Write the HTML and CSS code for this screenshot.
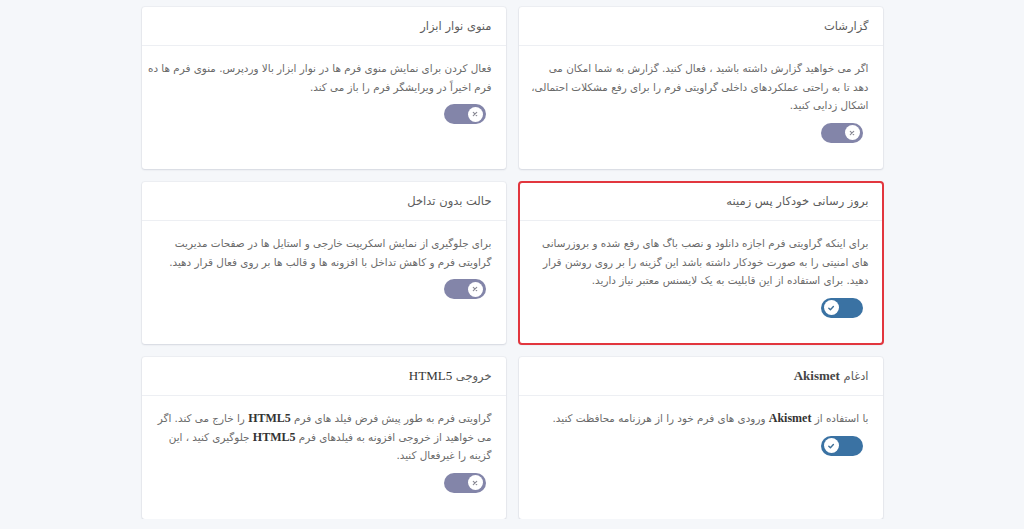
FILE: index.html
```html
<!DOCTYPE html>
<html lang="fa" dir="rtl">
<head>
<meta charset="utf-8">
<title>تنظیمات</title>
<link rel="stylesheet" href="styles.css">
</head>
<body>
<div class="grid">
  <section class="card">
    <header class="card-head"><span>گزارشات</span></header>
    <div class="card-body">
      <p class="desc">اگر می خواهید گزارش داشته باشید ، فعال کنید. گزارش به شما امکان می<br>دهد تا به راحتی عملکردهای داخلی گراویتی فرم را برای رفع مشکلات احتمالی،<br>اشکال زدایی کنید.</p>
      <span class="toggle off"><span class="knob"><svg viewBox="0 0 10 10"><path d="M3.3 3.3l3.4 3.4M6.7 3.3l-3.4 3.4"/></svg></span></span>
    </div>
  </section>
  <section class="card">
    <header class="card-head"><span>منوی نوار ابزار</span></header>
    <div class="card-body">
      <p class="desc">فعال کردن برای نمایش منوی فرم ها در نوار ابزار بالا وردپرس. منوی فرم ها ده<br>فرم اخیراً در ویرایشگر فرم را باز می کند.</p>
      <span class="toggle off"><span class="knob"><svg viewBox="0 0 10 10"><path d="M3.3 3.3l3.4 3.4M6.7 3.3l-3.4 3.4"/></svg></span></span>
    </div>
  </section>
  <section class="card highlight">
    <header class="card-head"><span>بروز رسانی خودکار پس زمینه</span></header>
    <div class="card-body">
      <p class="desc">برای اینکه گراویتی فرم اجازه دانلود و نصب باگ های رفع شده و بروزرسانی<br>های امنیتی را به صورت خودکار داشته باشد این گزینه را بر روی روشن قرار<br>دهید. برای استفاده از این قابلیت به یک لایسنس معتبر نیاز دارید.</p>
      <span class="toggle on"><span class="knob"><svg viewBox="0 0 10 10"><path d="M2.8 5.2l1.6 1.5 3-3.2"/></svg></span></span>
    </div>
  </section>
  <section class="card">
    <header class="card-head"><span>حالت بدون تداخل</span></header>
    <div class="card-body">
      <p class="desc">برای جلوگیری از نمایش اسکریپت خارجی و استایل ها در صفحات مدیریت<br>گراویتی فرم و کاهش تداخل با افزونه ها و قالب ها بر روی فعال قرار دهید.</p>
      <span class="toggle off"><span class="knob"><svg viewBox="0 0 10 10"><path d="M3.3 3.3l3.4 3.4M6.7 3.3l-3.4 3.4"/></svg></span></span>
    </div>
  </section>
  <section class="card">
    <header class="card-head"><span>ادغام <b class="latin">Akismet</b></span></header>
    <div class="card-body">
      <p class="desc">با استفاده از <b class="latin">Akismet</b> ورودی های فرم خود را از هرزنامه محافظت کنید.</p>
      <span class="toggle on"><span class="knob"><svg viewBox="0 0 10 10"><path d="M2.8 5.2l1.6 1.5 3-3.2"/></svg></span></span>
    </div>
  </section>
  <section class="card">
    <header class="card-head"><span>خروجی <span class="latin plain">HTML5</span></span></header>
    <div class="card-body">
      <p class="desc">گراویتی فرم به طور پیش فرض فیلد های فرم <b class="latin">HTML5</b> را خارج می کند. اگر<br>می خواهید از خروجی افزونه به فیلدهای فرم <b class="latin">HTML5</b> جلوگیری کنید ، این<br>گزینه را غیرفعال کنید.</p>
      <span class="toggle off"><span class="knob"><svg viewBox="0 0 10 10"><path d="M3.3 3.3l3.4 3.4M6.7 3.3l-3.4 3.4"/></svg></span></span>
    </div>
  </section>
</div>
</body>
</html>
```
FILE: styles.css
```css
* { box-sizing: border-box; }
html, body { margin: 0; padding: 0; }
body {
  background: #f5f7fa;
  font-family: "DejaVu Sans", "Noto Sans", sans-serif;
  color: #666;
}
.grid {
  width: 741px;
  margin: 7px auto 0;
  display: grid;
  grid-template-columns: 364px 364px;
  column-gap: 13px;
  row-gap: 13px;
  grid-auto-rows: 162px;
}
.card {
  background: #fff;
  border-radius: 3px;
  box-shadow: 0 1px 2px rgba(40, 50, 80, 0.12), 0 0 0 1px rgba(40, 50, 80, 0.04);
  display: flex;
  flex-direction: column;
}
.card.highlight {
  outline: 2px solid #e2363e;
  outline-offset: -1px;
}
.card-head {
  height: 39px;
  padding: 0 14px;
  display: flex;
  align-items: center;
  font-size: 11.5px;
  color: #5c5c5c;
  border-bottom: 1px solid #edeff3;
}
.card-body {
  padding: 13px 14px 0;
  display: flex;
  flex-direction: column;
  align-items: flex-start;
}
.desc {
  margin: 0;
  font-size: 10.4px;
  line-height: 18.5px;
  color: #6a6a6a;
  white-space: nowrap;
}
.latin {
  font-family: "Liberation Serif", serif;
  font-weight: bold;
  color: #333;
  font-size: 12px;
}
.card-head .latin { font-size: 13px; font-weight: bold; color: #444; }
.card-head .latin.plain { font-weight: normal; color: #333; }
.toggle {
  margin: 8px 6px 0 0;
  width: 42px;
  height: 20px;
  border-radius: 10px;
  display: flex;
  align-items: center;
  padding: 0 3px;
}
.toggle.off { background: #8385a9; justify-content: flex-start; }
.toggle.on { background: #3a72a3; justify-content: flex-end; }
.knob {
  width: 15px;
  height: 15px;
  border-radius: 50%;
  background: #fff;
  display: flex;
  align-items: center;
  justify-content: center;
}
.knob svg { width: 10px; height: 10px; }
.knob path { fill: none; stroke: #8a8a95; stroke-width: 1.2; stroke-linecap: round; stroke-linejoin: round; }
.toggle.on .knob path { stroke: #3f6f96; stroke-width: 1.4; }
```
